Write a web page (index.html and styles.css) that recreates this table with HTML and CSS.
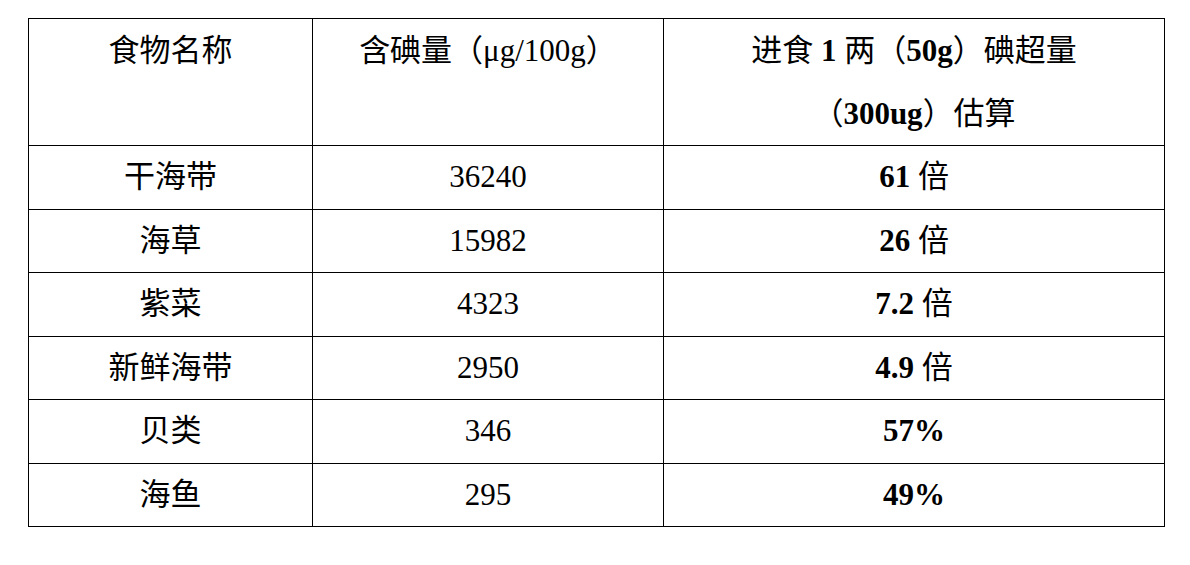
FILE: index.html
```html
<!DOCTYPE html>
<html lang="zh-CN">
<head>
<meta charset="utf-8">
<title>食物含碘量</title>
<link rel="stylesheet" href="styles.css">
</head>
<body>
<table class="iodine">
  <colgroup>
    <col class="c1">
    <col class="c2">
    <col class="c3">
  </colgroup>
  <thead>
    <tr class="head">
      <th>食物名称</th>
      <th>含碘量（μg/100g）</th>
      <th>进食 <b>1</b> 两（<b>50g</b>）碘超量<br>（<b>300ug</b>）估算</th>
    </tr>
  </thead>
  <tbody>
    <tr><td>干海带</td><td>36240</td><td><b>61</b> 倍</td></tr>
    <tr><td>海草</td><td>15982</td><td><b>26</b> 倍</td></tr>
    <tr><td>紫菜</td><td>4323</td><td><b>7.2</b> 倍</td></tr>
    <tr><td>新鲜海带</td><td>2950</td><td><b>4.9</b> 倍</td></tr>
    <tr><td>贝类</td><td>346</td><td><b>57%</b></td></tr>
    <tr><td>海鱼</td><td>295</td><td><b>49%</b></td></tr>
  </tbody>
</table>
</body>
</html>
```

FILE: styles.css
```css
html, body {
  margin: 0;
  padding: 0;
  background: #ffffff;
}

body {
  font-family: "Liberation Serif", "Noto Sans CJK SC", serif;
  color: #000000;
}

.iodine {
  margin: 18px 0 0 28px;
  width: 1136px;
  border-collapse: collapse;
  table-layout: fixed;
  font-size: 31px;
}

.c1 { width: 284px; }
.c2 { width: 351px; }
.c3 { width: 501px; }

.iodine th,
.iodine td {
  border: 1px solid #000000;
  padding: 0;
  text-align: center;
  font-weight: normal;
}

.iodine th {
  height: 125px;
  line-height: 63px;
  vertical-align: top;
}

.iodine td {
  height: 62.5px;
  line-height: 50px;
  vertical-align: middle;
}

.iodine b {
  font-weight: bold;
}
```
